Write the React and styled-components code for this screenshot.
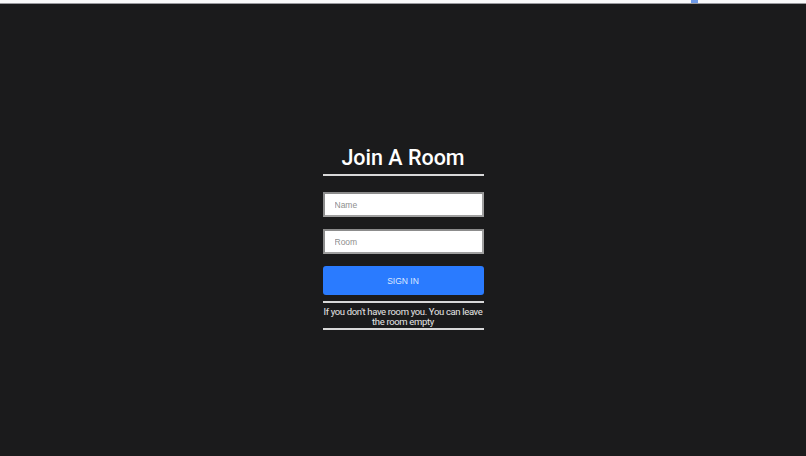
import styled, { createGlobalStyle } from 'styled-components'

const GlobalStyle = createGlobalStyle`
    html, body {
        margin: 0;
        padding: 0;
        background: #1b1b1c;
    }
    * {
        box-sizing: border-box;
    }
`;

const Page = styled.div`
    min-height: 100vh;
    background: #1b1b1c;
    font-family: Roboto, "Liberation Sans", sans-serif;
`;

const TopBar = styled.div`
    position: relative;
    height: 4px;
    background: #fafafa;
    border-bottom: 1px solid #9a9a9e;
`;

const TopMark = styled.span`
    position: absolute;
    left: 691px;
    top: 0;
    width: 7px;
    height: 3px;
    background: #6f9be8;
`;

const Main = styled.main`
    padding-top: 141px;
`;

const JoinBox = styled.div`
    width: 161px;
    margin: 0 auto;
    display: flex;
    flex-direction: column;
`;

const Heading = styled.h1`
    margin: 0;
    padding-bottom: 3px;
    border-bottom: 2px solid #d8d8d8;
    color: #fff;
    font-size: 21.5px;
    font-weight: 500;
    line-height: 26px;
    text-align: center;
`;

const Input = styled.input.attrs({ type: 'text' })`
    display: block;
    width: 100%;
    height: 25px;
    margin-top: ${props => props.gap || '12px'};
    padding: 0 10px;
    border: 2px solid #a0a0a0;
    border-top-color: #8c8c8c;
    border-left-color: #8c8c8c;
    background: #fff;
    font-family: "Liberation Sans", Arial, sans-serif;
    font-size: 8.5px;
    color: #333;
    outline: none;
    &::placeholder {
        color: #8e8e8e;
    }
`;

const Button = styled.button`
    width: 100%;
    height: 29px;
    margin-top: 12px;
    border: none;
    border-radius: 3px;
    background: #2a7bff;
    color: #dde8ff;
    font-family: "Liberation Sans", Arial, sans-serif;
    font-size: 8.5px;
    font-weight: 400;
    cursor: pointer;
`;

const Note = styled.p`
    margin: 6px 0 0;
    padding: 4px 0 1px;
    border-top: 2px solid #d8d8d8;
    border-bottom: 2px solid #d8d8d8;
    color: #e6e6e6;
    font-size: 9.5px;
    letter-spacing: -0.35px;
    line-height: 10px;
    text-align: center;
`;

export default function App() {
    return (
        <Page>
            <GlobalStyle />
            <TopBar>
                <TopMark />
            </TopBar>
            <Main>
                <JoinBox>
                    <Heading>Join A Room</Heading>
                    <Input placeholder="Name" gap="16px" />
                    <Input placeholder="Room" />
                    <Button>SIGN IN</Button>
                    <Note>If you don't have room you. You can leave the room empty</Note>
                </JoinBox>
            </Main>
        </Page>
    )
}
